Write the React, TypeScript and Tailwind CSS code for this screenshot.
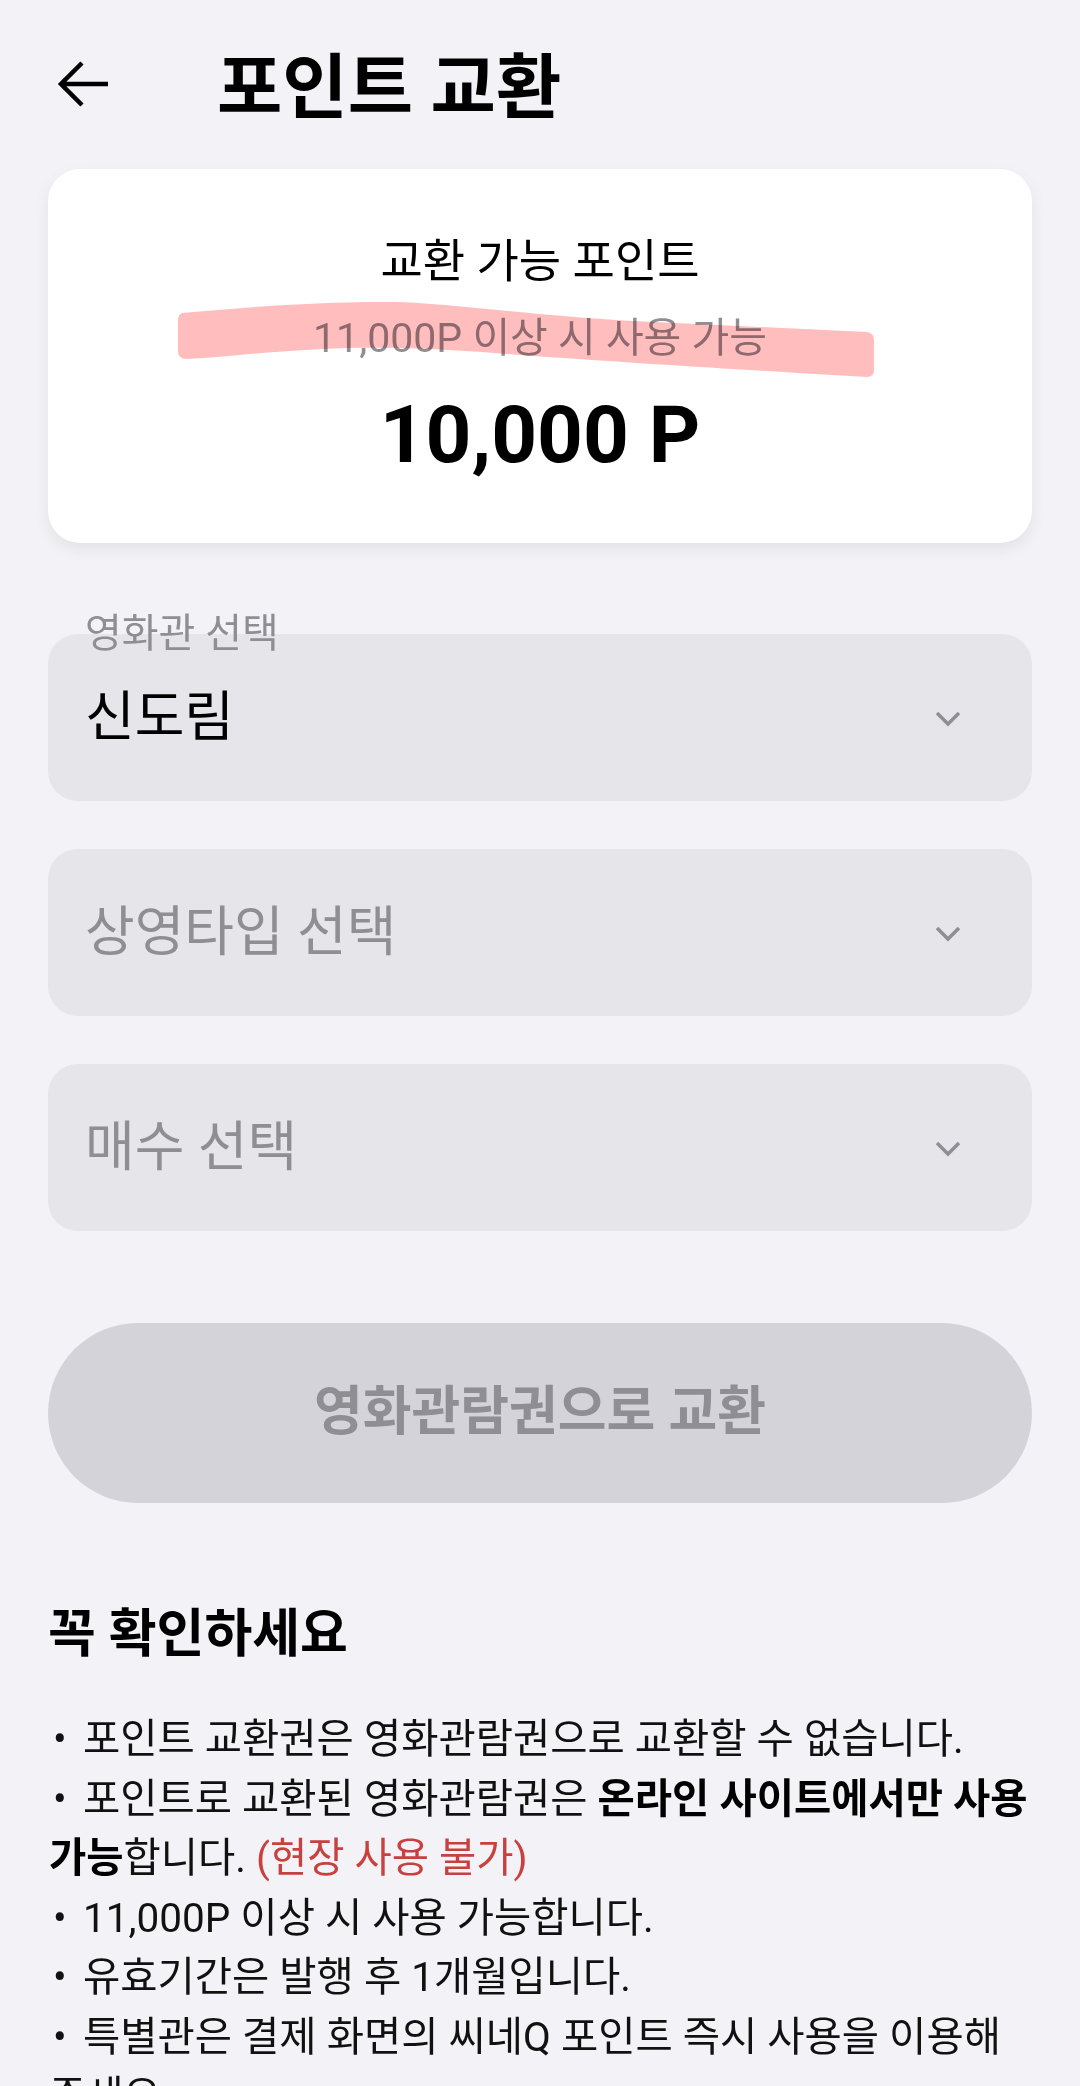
import React from 'react';

const ChevronDown = () => (
    <svg width="28" height="28" viewBox="0 0 28 28" fill="none" className="shrink-0">
        <path d="M3 9 L14 20 L25 9" stroke="#8e8e93" strokeWidth="3.5" strokeLinecap="butt" strokeLinejoin="miter" />
    </svg>
);

interface SelectBoxProps {
    label?: string;
    value?: string;
    placeholder: string;
}

const SelectBox: React.FC<SelectBoxProps> = ({ label, value, placeholder }) => (
    <div className="flex flex-col">
        {label && (
            <p className="relative z-10 pl-[37px] -mb-[20px] text-[40px] leading-[40px] text-[#8e8e93]">{label}</p>
        )}
        <div className="h-[167px] rounded-[30px] bg-[#e5e5ea] flex items-center justify-between pl-[37px] pr-[70px]">
            <span className={`text-[54px] leading-[64px] ${value ? 'text-black' : 'text-[#8e8e93]'}`}>{value || placeholder}</span>
            <ChevronDown />
        </div>
    </div>
);

const Bullet = () => <span className="inline-block w-[34px] pl-[4px]">•</span>;

export default function App() {
    return (
        <div className="h-[2086px] overflow-hidden bg-[#f2f2f7] text-black font-['Roboto','Noto_Sans_CJK_KR',sans-serif]">
            {/* header */}
            <div className="flex items-center h-[169px] pt-[5px] pl-[56px]">
                <svg width="56" height="56" viewBox="0 0 56 56" fill="none" className="mb-[6px] shrink-0">
                    <path d="M5 28 H52 M26 7 L5 28 L26 49" stroke="#000" strokeWidth="4.5" />
                </svg>
                <h1 className="ml-[105px] text-[71px] font-bold leading-none">포인트 교환</h1>
            </div>

            {/* points card */}
            <div className="relative mx-[48px] rounded-[32px] bg-white shadow-[0_6px_16px_rgba(0,0,0,0.07)] flex flex-col items-center pt-[68px] pb-[70px]">
                <p className="text-[46px] leading-[48px]">교환 가능 포인트</p>
                <p className="mt-[29px] text-[41px] leading-[48px] text-[#8e8e93]">11,000P 이상 시 사용 가능</p>
                <p className="mt-[35px] text-[80px] leading-[76px] font-bold">10,000 P</p>
                <svg className="absolute inset-0 w-full h-full pointer-events-none mix-blend-multiply" viewBox="0 0 984 374" preserveAspectRatio="none">
                    <path
                        d="M134 144 C200 138 280 132 345 133 C400 134 480 146 585 152 L819 163 Q826 164 826 171 L826 201 Q826 208 819 208 L785 206 C700 201 600 195 472 186 C420 182 370 178 300 179 C230 181 180 188 139 190 Q130 190 130 182 L130 152 Q130 145 134 144 Z"
                        fill="#ffbdbd"
                    />
                </svg>
            </div>

            {/* selects */}
            <div className="mx-[48px] mt-[71px] flex flex-col gap-[48px]">
                <SelectBox label="영화관 선택" value="신도림" placeholder="영화관 선택" />
                <SelectBox placeholder="상영타입 선택" />
                <SelectBox placeholder="매수 선택" />
            </div>

            <button className="mx-[48px] mt-[92px] w-[984px] h-[180px] rounded-full bg-[#d4d3d9] text-[53px] font-bold text-[#8e8e93] flex items-center justify-center">
                영화관람권으로 교환
            </button>

            {/* notice */}
            <h2 className="ml-[48px] mt-[102px] text-[52px] leading-[60px] font-bold">꼭 확인하세요</h2>
            <div className="ml-[49px] mr-[30px] mt-[45px] text-[40.5px] leading-[59.5px] text-[#111] break-keep">
                <p><Bullet />포인트 교환권은 영화관람권으로 교환할 수 없습니다.</p>
                <p>
                    <Bullet />포인트로 교환된 영화관람권은 <b className="font-bold text-black">온라인 사이트에서만 사용 가능</b>합니다.{' '}
                    <span className="text-[#c8413f]">(현장 사용 불가)</span>
                </p>
                <p><Bullet />11,000P 이상 시 사용 가능합니다.</p>
                <p><Bullet />유효기간은 발행 후 1개월입니다.</p>
                <p><Bullet />특별관은 결제 화면의 씨네Q 포인트 즉시 사용을 이용해 주세요.</p>
            </div>
        </div>
    );
}
